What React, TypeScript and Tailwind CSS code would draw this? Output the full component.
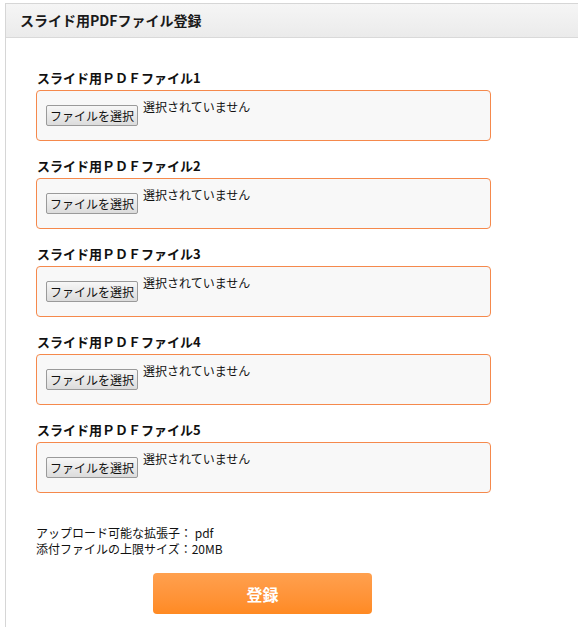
import React from "react";

const font = { fontFamily: '"Noto Sans CJK JP", "Liberation Sans", sans-serif' };

function FileRow({ n }: { n: number }) {
  return (
    <div className="pb-[17px]">
      <div className="text-[13px] leading-[16px] font-bold text-[#111] mb-[4px] pl-[1px]">
        スライド用ＰＤＦファイル{n}
      </div>
      <div className="w-[455px] h-[51px] border border-[#f5894c] rounded-[4px] bg-[#f8f8f8] pl-[9px] pt-[9px] flex items-start">
        <button className="mt-[5px] h-[21px] px-[3px] text-[12px] leading-[19px] text-[#111] border border-[#9a9a9a] rounded-[2px] bg-gradient-to-b from-[#f7f7f7] to-[#dcdcdc]">
          ファイルを選択
        </button>
        <span className="ml-[5px] text-[12px] leading-[14px] text-[#111]">選択されていません</span>
      </div>
    </div>
  );
}

export default function App() {
  return (
    <div className="w-[578px] h-[627px] bg-white pl-[5px] pt-[3px] overflow-hidden" style={font}>
      <div className="h-full border-l border-t border-[#d6d6d6]">
        <div className="h-[34px] bg-gradient-to-b from-[#f5f5f5] to-[#ebebeb] border-b border-[#d9d9d9] pl-[14px] flex items-center">
          <span className="text-[14px] font-bold text-[#1a1a1a]">スライド用PDFファイル登録</span>
        </div>
        <div className="pl-[30px] pt-[32px]">
          {[1, 2, 3, 4, 5].map((n) => (
            <FileRow key={n} n={n} />
          ))}
          <div className="pt-[15px] text-[12px] leading-[16px] text-[#111]">
            <div>アップロード可能な拡張子： pdf</div>
            <div>添付ファイルの上限サイズ：20MB</div>
          </div>
          <button className="mt-[16px] ml-[117px] w-[219px] h-[41px] rounded-[4px] bg-gradient-to-b from-[#ffa04e] to-[#ff8a22] text-white text-[16px] font-bold flex items-center justify-center">
            登録
          </button>
        </div>
      </div>
    </div>
  );
}
